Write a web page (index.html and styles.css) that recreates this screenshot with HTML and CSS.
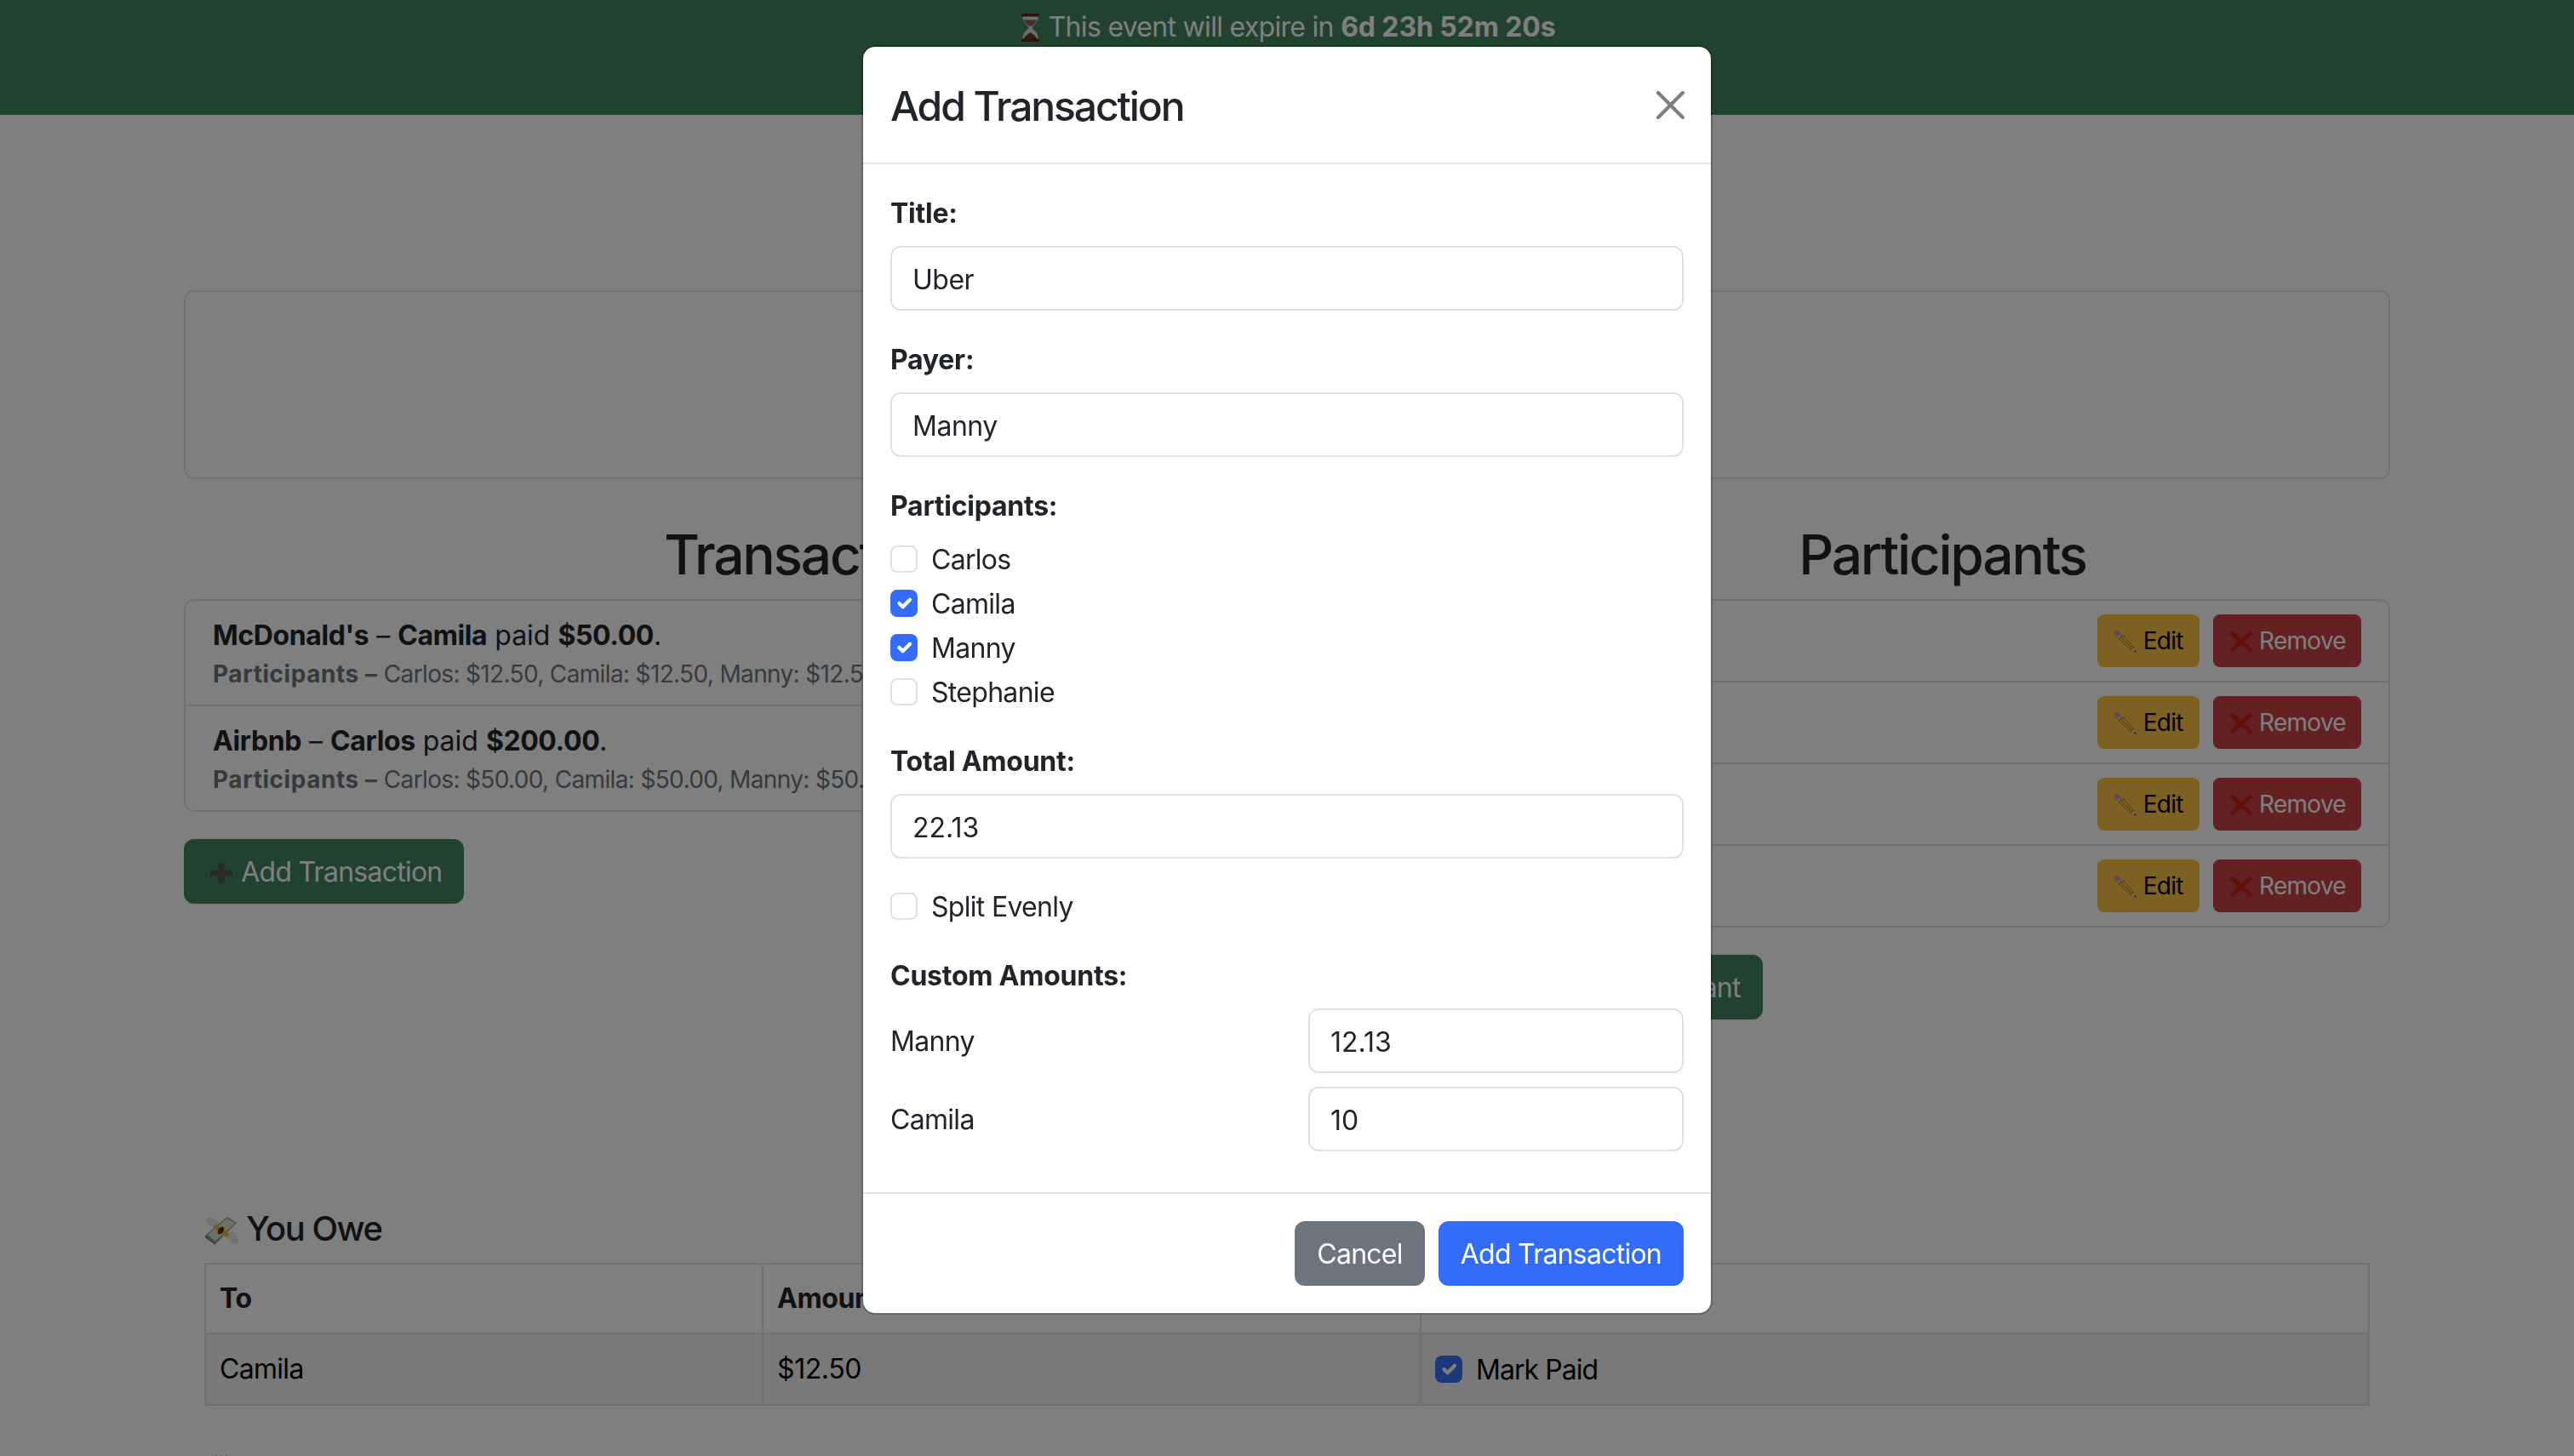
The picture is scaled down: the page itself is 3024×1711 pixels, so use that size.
FILE: index.html
```html
<!DOCTYPE html>
<html lang="en">
<head>
<meta charset="utf-8">
<title>Add Transaction</title>
<link rel="stylesheet" href="styles.css">
</head>
<body>
<svg class="sprite" aria-hidden="true">
  <symbol id="i-hourglass" viewBox="0 0 22 32">
    <path d="M2 3h18c0 6-4 9.500-7 12.500v1c3 3 7 6.500 7 12.500H2c0-6 4-9.500 7-12.500v-1C6 12.500 2 9 2 3z" fill="#d9dcde"/>
    <path d="M3.500 7h15c-1 2.500-2.500 4.500-5 6.500-1.500 1.200-3.500 1.200-5 0C6 11.500 4.500 9.500 3.500 7z" fill="#8a5c3c"/>
    <path d="M3.500 29c.5-3 3.500-5.500 7.500-7.500 4 2 7 4.500 7.500 7.500z" fill="#6b3f22"/>
    <rect x="1" y="0" width="20" height="3.500" rx="1" fill="#4a2c1c"/>
    <rect x="1" y="28.500" width="20" height="3.500" rx="1" fill="#4a2c1c"/>
  </symbol>
  <symbol id="i-money" viewBox="0 0 40 34">
    <path d="M1 3l5-2 3 1 3 2 5 3 2 3-8 4-6-4-3-4z" fill="#e4e4dc"/>
    <path d="M39 33l-5 0-3-2-3-3-3-4 0-3 8-3 5 5 2 5z" fill="#e4e4dc"/>
    <path d="M1 23L27 1l11 7-25 25z" fill="#8fa186"/>
    <path d="M1 23l12 10v1L1 25z" fill="#4d5c49"/>
    <path d="M4 22L27 2.500l9 6-23 21z" fill="#d8e4cd"/>
    <path d="M10 13l16 12 3.500-3.500L14 9.500z" fill="#eeb52f"/>
    <ellipse cx="19.500" cy="17" rx="3" ry="5" fill="#4d3c18" transform="rotate(35 19.500 17)"/>
  </symbol>
  <symbol id="i-pencil" viewBox="0 0 28 28">
    <path d="M1.500 6a3.200 3.200 0 0 1 4.500-4.500L8.500 4 4 8.500z" fill="#e2899d"/>
    <path d="M8.500 4L11 6.500 6.500 11 4 8.500z" fill="#b5c0cc"/>
    <path d="M11 6.500L24 21l-3 3L6.500 11z" fill="#f9cb45" stroke="#7a5510" stroke-width=".8"/>
    <path d="M8.800 8.800L22.500 22.500" fill="none" stroke="#b5831c" stroke-width="1.200"/>
    <path d="M24 21l3 6-6-3z" fill="#ecd0a6"/>
    <path d="M25.500 24l1.500 3-3-1.500z" fill="#1d1d1d"/>
  </symbol>
  <symbol id="i-cross" viewBox="0 0 28 28">
    <path d="M4 1l10 9.500L24 1l3.500 3.500L18 14l9.500 9.500L24 27l-10-9.500L4 27 .5 23.500 10 14 .5 4.500z" fill="#c91d16"/>
  </symbol>
  <symbol id="i-plus" viewBox="0 0 26 24">
    <path d="M9.500 0h7v8.500H26v7h-9.500V24h-7v-8.500H0v-7h9.500z" fill="#555"/>
  </symbol>
  <symbol id="i-check" viewBox="0 0 20 20">
    <path d="M6 10l3 3 6-6" fill="none" stroke="#fff" stroke-width="3" stroke-linecap="round" stroke-linejoin="round"/>
  </symbol>
  <symbol id="i-close" viewBox="0 0 16 16">
    <path d="M.293.293a1 1 0 0 1 1.414 0L8 6.586 14.293.293a1 1 0 1 1 1.414 1.414L9.414 8l6.293 6.293a1 1 0 0 1-1.414 1.414L8 9.414l-6.293 6.293a1 1 0 0 1-1.414-1.414L6.586 8 .293 1.707a1 1 0 0 1 0-1.414z"/>
  </symbol>
  <symbol id="i-bag" viewBox="0 0 32 32">
    <path d="M9 0l4 3 3-2 3 2 4-3-2 8H11z" fill="#d9b44a"/>
    <path d="M11 8h10c6 4 9 10 9 15 0 6-6 9-14 9S2 29 2 23c0-5 3-11 9-15z" fill="#e3b94c"/>
  </symbol>
</svg>

<header class="banner">
  <p class="banner-text"><svg class="emoji emoji-hourglass"><use href="#i-hourglass"/></svg> This event will expire in <strong>6d 23h 52m 20s</strong></p>
</header>

<main class="page">
  <div class="summary-box"></div>

  <div class="columns">
    <section>
      <h2 class="col-title">Transactions</h2>
      <ul class="list">
        <li class="list-item tx">
          <div class="tx-title"><strong>McDonald's</strong> – <strong>Camila</strong> paid <strong>$50.00</strong>.</div>
          <div class="tx-sub"><strong>Participants –</strong> Carlos: $12.50, Camila: $12.50, Manny: $12.50, Stephanie: $12.50</div>
        </li>
        <li class="list-item tx">
          <div class="tx-title"><strong>Airbnb</strong> – <strong>Carlos</strong> paid <strong>$200.00</strong>.</div>
          <div class="tx-sub"><strong>Participants –</strong> Carlos: $50.00, Camila: $50.00, Manny: $50.00, Stephanie: $50.00</div>
        </li>
      </ul>
      <button class="btn btn-green add-btn" type="button"><svg class="emoji emoji-plus"><use href="#i-plus"/></svg> Add Transaction</button>
    </section>

    <section>
      <h2 class="col-title">Participants</h2>
      <ul class="list">
        <li class="list-item person"><span>Carlos</span><span class="actions"><button class="btn-sm btn-yellow" type="button"><svg class="emoji emoji-sm"><use href="#i-pencil"/></svg> Edit</button><button class="btn-sm btn-red" type="button"><svg class="emoji emoji-sm"><use href="#i-cross"/></svg> Remove</button></span></li>
        <li class="list-item person"><span>Camila</span><span class="actions"><button class="btn-sm btn-yellow" type="button"><svg class="emoji emoji-sm"><use href="#i-pencil"/></svg> Edit</button><button class="btn-sm btn-red" type="button"><svg class="emoji emoji-sm"><use href="#i-cross"/></svg> Remove</button></span></li>
        <li class="list-item person"><span>Manny</span><span class="actions"><button class="btn-sm btn-yellow" type="button"><svg class="emoji emoji-sm"><use href="#i-pencil"/></svg> Edit</button><button class="btn-sm btn-red" type="button"><svg class="emoji emoji-sm"><use href="#i-cross"/></svg> Remove</button></span></li>
        <li class="list-item person"><span>Stephanie</span><span class="actions"><button class="btn-sm btn-yellow" type="button"><svg class="emoji emoji-sm"><use href="#i-pencil"/></svg> Edit</button><button class="btn-sm btn-red" type="button"><svg class="emoji emoji-sm"><use href="#i-cross"/></svg> Remove</button></span></li>
      </ul>
      <button class="btn btn-green add-btn" type="button"><svg class="emoji emoji-plus"><use href="#i-plus"/></svg> Add Participant</button>
    </section>
  </div>

  <section class="owe">
    <h5 class="owe-title"><svg class="emoji emoji-money"><use href="#i-money"/></svg> You Owe</h5>
    <table class="owe-table">
      <thead>
        <tr><th class="c1">To</th><th class="c2">Amount</th><th>Action</th></tr>
      </thead>
      <tbody>
        <tr>
          <td>Camila</td>
          <td class="cell-num">$12.50</td>
          <td class="cell-check"><span class="check-line"><span class="box box-on box-dark"><svg class="tick"><use href="#i-check"/></svg></span>Mark Paid</span></td>
        </tr>
      </tbody>
    </table>
    <h5 class="owe-title owe-next"><svg class="emoji emoji-money emoji-bag"><use href="#i-bag"/></svg> Owed to You</h5>
  </section>
</main>

<div class="backdrop">
  <div class="modal">
    <div class="modal-head">
      <h5 class="modal-title">Add Transaction</h5>
      <svg class="close"><use href="#i-close"/></svg>
    </div>
    <div class="modal-body">
      <div class="group">
        <label class="label">Title:</label>
        <input class="input" type="text" value="Uber">
      </div>
      <div class="group">
        <label class="label">Payer:</label>
        <input class="input" type="text" value="Manny">
      </div>
      <div class="group">
        <label class="label">Participants:</label>
        <div class="checks">
          <span class="check-line"><span class="box"></span>Carlos</span>
          <span class="check-line"><span class="box box-on"><svg class="tick"><use href="#i-check"/></svg></span>Camila</span>
          <span class="check-line"><span class="box box-on"><svg class="tick"><use href="#i-check"/></svg></span>Manny</span>
          <span class="check-line"><span class="box"></span>Stephanie</span>
        </div>
      </div>
      <div class="group">
        <label class="label">Total Amount:</label>
        <input class="input num" type="text" value="22.13">
      </div>
      <div class="group">
        <span class="check-line"><span class="box"></span>Split Evenly</span>
      </div>
      <div class="group">
        <label class="label">Custom Amounts:</label>
        <div class="amounts">
          <span class="amount-name">Manny</span>
          <input class="input num" type="text" value="12.13">
          <span class="amount-name">Camila</span>
          <input class="input num" type="text" value="10">
        </div>
      </div>
    </div>
    <div class="modal-foot">
      <button class="btn btn-grey" type="button">Cancel</button>
      <button class="btn btn-blue" type="button">Add Transaction</button>
    </div>
  </div>
</div>
</body>
</html>
```
FILE: styles.css
```css
* { box-sizing: border-box; }

html, body {
  margin: 0;
  height: 100vh;
  overflow: hidden;
}

body {
  background: #fff;
  color: #212529;
  font-family: Inter, "Liberation Sans", sans-serif;
  font-size: 32px;
  line-height: 48px;
  letter-spacing: -.7px;
}

strong { font-weight: 700; letter-spacing: -.4px; }

.sprite { display: none; }

.emoji { display: inline-block; vertical-align: middle; }
.emoji-hourglass { width: 25px; height: 33px; margin: -4px 0 0 2px; }
.emoji-money { width: 40px; height: 34px; margin: -3px 0 0 0; }
.emoji-bag { margin-top: -6px; }
.emoji-plus { width: 26px; height: 24px; margin: -3px 2px 0 5px; }
.emoji-sm { width: 28px; height: 28px; margin: -3px 0 0 1px; }

/* banner */
.banner {
  height: 135px;
  background: #42845c;
  color: #fff;
  padding-top: 8px;
  text-align: center;
}
.banner-text { margin: 0; }
.banner-text strong { letter-spacing: -.1px; }

/* main page */
.page { padding: 0 216px; }

.summary-box {
  height: 222px;
  margin-top: 206px;
  border: 2px solid #dee2e6;
  border-radius: 12px;
}

.columns {
  display: grid;
  grid-template-columns: 1496px 1052px;
  gap: 44px;
  margin-top: 48px;
}

.col-title {
  margin: 0 0 16px;
  padding-top: 2px;
  height: 77px;
  font-size: 64px;
  font-weight: 500;
  line-height: 77px;
  letter-spacing: -2.25px;
  text-align: center;
}

.list {
  list-style: none;
  margin: 0;
  padding: 0;
  border: 2px solid #dee2e6;
  border-radius: 12px;
}

.list-item { padding: 16px 32px; }
.list-item + .list-item { border-top: 2px solid #dee2e6; }

.tx { padding: 17px 32px 15px; }
.tx-title { line-height: 48px; letter-spacing: 0; }
.tx-sub { font-size: 28px; line-height: 42px; letter-spacing: -.65px; color: #6c757d; }
.tx-sub strong { letter-spacing: .55px; }

.person {
  display: flex;
  justify-content: space-between;
  align-items: center;
}

.actions { display: flex; gap: 16px; }

/* buttons */
.btn {
  height: 76px;
  padding: 2px 24px 0;
  border: 2px solid transparent;
  border-radius: 12px;
  font: inherit;
  letter-spacing: -.75px;
  color: #fff;
}
.add-btn { display: block; margin-top: 32px; }
.btn-green { background: #42845c; }
.btn-grey { background: #6c757d; }
.btn-blue { background: #336df7; }

.btn-sm {
  height: 62px;
  padding: 0 16px;
  border: 2px solid transparent;
  border-radius: 8px;
  font: inherit;
  font-size: 28px;
  line-height: 42px;
  letter-spacing: -.7px;
}
.btn-yellow { padding: 0 17px 0 16px; background: #fac244; color: #000; }
.btn-red { background: #c64246; color: #fff; }

/* owe table */
.owe { padding: 0 24px; margin-top: 222px; }

.owe-title {
  margin: 0 0 16px;
  font-size: 40px;
  font-weight: 500;
  line-height: 48px;
  letter-spacing: -1.5px;
}

.owe-next { margin-top: 50px; }

.owe-table {
  width: 100%;
  table-layout: fixed;
  border-collapse: collapse;
  border: 2px solid #dee2e6;
}
.owe-table th, .owe-table td {
  border: 2px solid #dee2e6;
  padding: 16px;
  text-align: left;
  vertical-align: middle;
}
.owe-table th { height: 82px; font-weight: 700; letter-spacing: -.4px; }
.owe-table td { height: 84px; background: #f2f2f2; color: #000; }
.c1 { width: 655px; }
.c2 { width: 773px; }
.owe-table .cell-num { letter-spacing: -.4px; }
.owe-table .cell-check { letter-spacing: -.95px; }

/* checks */
.check-line {
  display: flex;
  align-items: center;
  gap: 16px;
  height: 48px;
  padding-top: 2px;
}

.box {
  flex: none;
  width: 32px;
  height: 32px;
  margin-top: -2px;
  border: 2px solid #dee2e6;
  border-radius: 8px;
  background: #fff;
}
.box-on { border-color: #336df7; background: #336df7; }
.box-dark { border-color: #3470f5; background: #3470f5; }

.tick { display: block; width: 28px; height: 28px; }

/* modal */
.backdrop {
  position: fixed;
  inset: 0;
  display: flex;
  justify-content: center;
  align-items: flex-start;
  padding-top: 53px;
  background: rgba(0, 0, 0, .5);
}

.modal {
  width: 1000px;
  background: #fff;
  background-clip: padding-box;
  border: 2px solid rgba(0, 0, 0, .2);
  border-radius: 16px;
}

.modal-head {
  display: flex;
  align-items: center;
  justify-content: space-between;
  padding: 32px;
  border-bottom: 2px solid #dee2e6;
}

.modal-title {
  height: 72px;
  margin: 0;
  padding-top: 2px;
  font-size: 48px;
  font-weight: 500;
  line-height: 72px;
  letter-spacing: -2.1px;
}

.close {
  width: 33px;
  height: 33px;
  margin-right: -1px;
  fill: #000;
  opacity: .5;
}

.modal-body { padding: 32px 32px 16px; }

.group { margin-bottom: 32px; }

.label {
  display: block;
  height: 48px;
  margin-bottom: 16px;
  padding-top: 2px;
  font-weight: 700;
  letter-spacing: -.25px;
}

.input {
  display: block;
  width: 100%;
  height: 76px;
  padding: 2px 24px 0;
  border: 2px solid #dee2e6;
  border-radius: 12px;
  background: #fff;
  color: #212529;
  font: inherit;
  letter-spacing: -.5px;
}
.input.num { letter-spacing: 0; }

.checks { display: flex; flex-direction: column; gap: 4px; }

.amounts {
  display: grid;
  grid-template-columns: 1fr 441px;
  gap: 16px 0;
  align-items: center;
}

.amount-name { padding-top: 2px; }

.modal-foot {
  display: flex;
  justify-content: flex-end;
  gap: 16px;
  padding: 32px;
  border-top: 2px solid #dee2e6;
}
```
